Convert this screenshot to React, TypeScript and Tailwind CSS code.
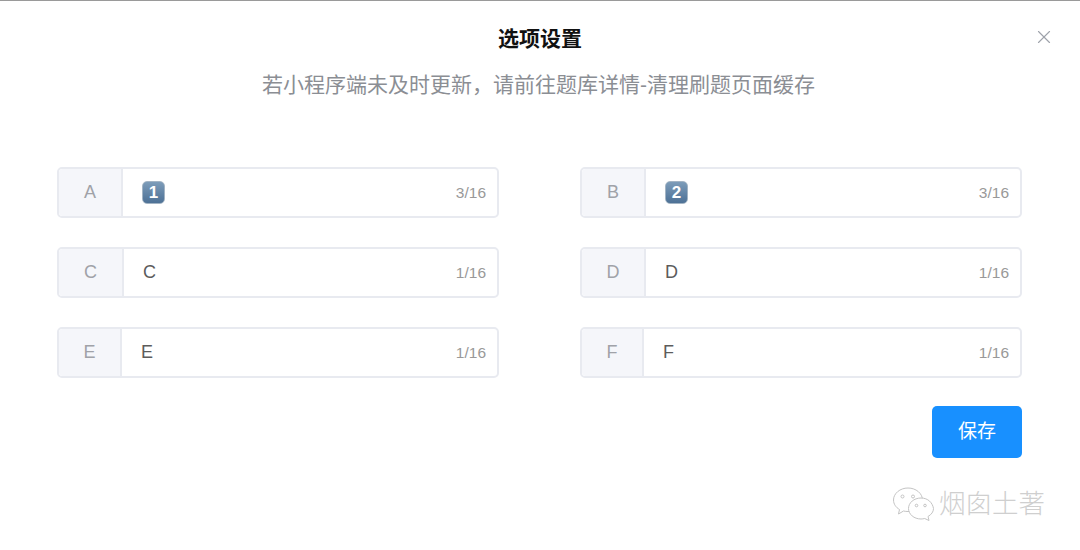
import { X } from 'lucide-react'

const font = { fontFamily: '"Liberation Sans", "Noto Sans CJK SC", sans-serif' }

function Keycap({ n }: { n: string }) {
  return (
    <span className="flex h-[23px] w-[23px] items-center justify-center rounded-[5px] border border-[#a3b4c4] bg-gradient-to-b from-[#7d9cb9] to-[#4d7196] text-[17px] font-bold text-white">
      {n}
    </span>
  )
}

function Option({ label, value, count, labelW, cap }: { label: string; value: string; count: string; labelW: string; cap?: boolean }) {
  return (
    <div className="flex h-[51px] w-[442px] items-stretch rounded-[5px] border-2 border-[#e8eaf0] bg-white">
      <div className={`flex ${labelW} shrink-0 items-center justify-center rounded-l-[4px] border-r-2 border-[#e8eaf0] bg-[#f5f6fa] text-[18px] text-[#a0a2a8]`}>
        {label}
      </div>
      <div className="flex flex-1 items-center justify-between pl-[19px] pr-[11px]">
        {cap ? <Keycap n={value} /> : <span className="text-[18px] text-[#5c5c5c]">{value}</span>}
        <span className="text-[15.5px] text-[#999999]">{count}</span>
      </div>
    </div>
  )
}

export default function App() {
  return (
    <div className="relative h-[550px] w-[1080px] overflow-hidden border-t border-[#9a9a9a] bg-white" style={font}>
      <div className="flex flex-col items-center pt-[24px]">
        <h1 className="text-[21px] leading-[28px] font-bold text-[#111111]">选项设置</h1>
        <p className="mt-[18px] mr-[3px] text-[21px] leading-[28px] text-[#8b8e94]">若小程序端未及时更新，请前往题库详情-清理刷题页面缓存</p>
      </div>
      <X className="absolute top-[25px] right-[25px] h-[22px] w-[22px] text-[#9ea2aa]" strokeWidth={1.25} />

      <div className="mt-[68px] ml-[57px] grid w-[965px] grid-cols-[442px_442px] justify-between gap-y-[29px]">
        <Option label="A" value="1" count="3/16" labelW="w-[64px]" cap />
        <Option label="B" value="2" count="3/16" labelW="w-[64px]" cap />
        <Option label="C" value="C" count="1/16" labelW="w-[65px]" />
        <Option label="D" value="D" count="1/16" labelW="w-[64px]" />
        <Option label="E" value="E" count="1/16" labelW="w-[63px]" />
        <Option label="F" value="F" count="1/16" labelW="w-[62px]" />
      </div>

      <div className="mt-[28px] mr-[58px] flex justify-end">
        <button className="h-[52px] w-[90px] rounded-[5px] bg-[#1890ff] text-[19px] text-white">保存</button>
      </div>

      {/* 水印 */}
      <div className="absolute top-[486px] left-[892px] flex items-center gap-[3px]">
        <svg width="44" height="34" viewBox="0 0 44 34" fill="white" stroke="#c4c4c4" strokeWidth="1">
          <path d="M16 1C8 1 1.500 6.500 1.500 13c0 4 2.500 7.500 6 9.500L6.500 27l5-3c1.500.4 3 .5 4.500.5 8 0 14.500-5 14.500-11.500S24 1 16 1z" />
          <circle cx="10.500" cy="9.500" r="1.500" />
          <circle cx="21" cy="9.500" r="1.500" />
          <path d="M29 11c-7 0-12.500 4.700-12.500 10.500S22 32 29 32c1.300 0 2.500-.2 3.700-.5l4.300 2-1-4c3.500-2 5.500-4.800 5.500-8C40.500 15.700 36 11 29 11z" />
          <circle cx="24.500" cy="18.500" r="1.300" />
          <circle cx="33" cy="18.500" r="1.300" />
        </svg>
        <span className="text-[26.500px] leading-[30px] font-light text-[#cfcfcf]">烟囱土著</span>
      </div>
    </div>
  )
}
